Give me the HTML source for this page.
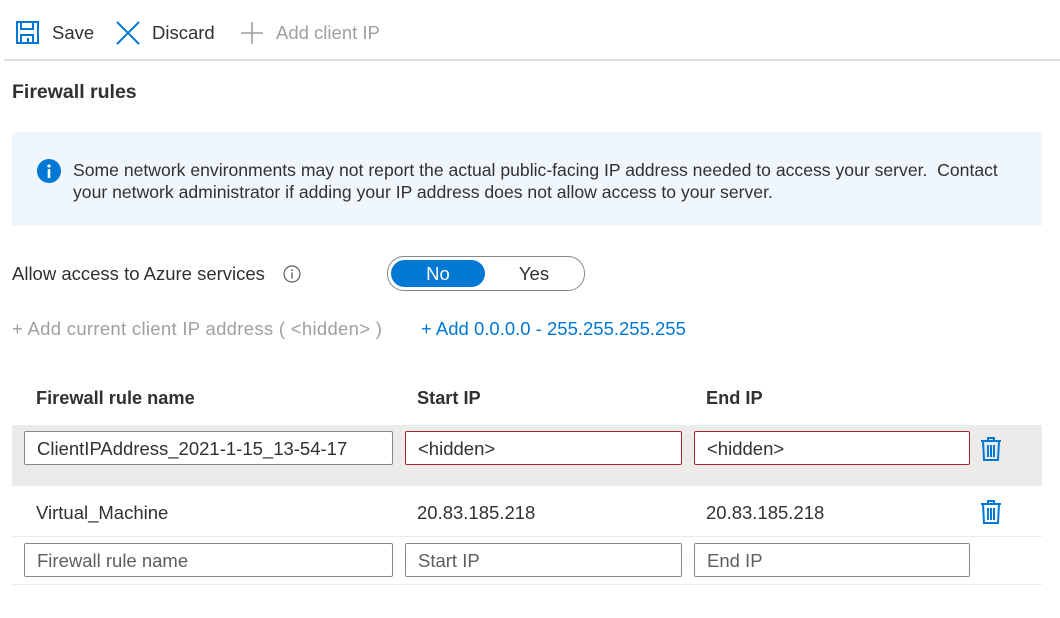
<!DOCTYPE html>
<html><head><meta charset="utf-8"><style>
body{margin:0;width:1060px;height:618px;background:#fff;font-family:"Liberation Sans",sans-serif;color:#323130;position:relative;overflow:hidden}
.a{position:absolute;white-space:nowrap}
.inp{position:absolute;height:34px;box-sizing:border-box;border:1px solid #8a8886;border-radius:2px;background:#fff;font-size:18.5px;line-height:34px;padding-left:12px;color:#323130}
.red{border-color:#a4262c}
.ph{color:#605e5c}
</style></head><body>
<svg class="a" style="left:15px;top:20px" width="26" height="26" viewBox="0 0 26 26" fill="none" stroke="#0078d4" stroke-width="2"><rect x="2" y="2" width="21" height="21"/><path d="M6 2v7h12V2M6 23v-8h12v8M13 18v5"/></svg>
<div class="a" style="left:52px;top:22px;font-size:18.5px">Save</div>
<svg class="a" style="left:115px;top:20px" width="26" height="26" viewBox="0 0 26 26" stroke="#0078d4" stroke-width="2"><path d="M2 2L24 24M24 2L2 24"/></svg>
<div class="a" style="left:152px;top:22px;font-size:18.5px">Discard</div>
<svg class="a" style="left:240px;top:21px" width="24" height="24" viewBox="0 0 24 24" stroke="#a19f9d" stroke-width="1.6"><path d="M12 1v22M1 12h22"/></svg>
<div class="a" style="left:276px;top:22px;font-size:18.5px;color:#a19f9d">Add client IP</div>
<div class="a" style="left:4px;top:59px;width:1056px;height:2px;background:#e1dfdd"></div>
<div class="a" style="left:12px;top:81px;font-size:19.5px;font-weight:bold">Firewall rules</div>
<div class="a" style="left:12px;top:132px;width:1030px;height:94px;background:#eff6fc"></div>
<svg class="a" style="left:37px;top:159px" width="24" height="24" viewBox="0 0 24 24"><circle cx="12" cy="12" r="12" fill="#0078d4"/><circle cx="12" cy="7" r="1.6" fill="#fff"/><rect x="10.7" y="10" width="2.6" height="9" fill="#fff"/></svg>
<div class="a" style="left:73px;top:159px;font-size:17.6px;line-height:22px">Some network environments may not report the actual public-facing IP address needed to access your server.&nbsp; Contact<br>your network administrator if adding your IP address does not allow access to your server.</div>
<div class="a" style="left:12px;top:263px;font-size:18.5px">Allow access to Azure services</div>
<svg class="a" style="left:283px;top:265px" width="18" height="18" viewBox="0 0 18 18"><circle cx="9" cy="9" r="8" fill="none" stroke="#605e5c" stroke-width="1.2"/><rect x="8.3" y="7.5" width="1.4" height="6" fill="#605e5c"/><circle cx="9" cy="5.2" r="0.9" fill="#605e5c"/></svg>
<div class="a" style="left:387px;top:256px;width:196px;height:33px;border:1px solid #8a8886;border-radius:17px"></div>
<div class="a" style="left:391px;top:260px;width:94px;height:27px;background:#0078d4;border-radius:14px;color:#fff;font-size:18.5px;text-align:center;line-height:27px">No</div>
<div class="a" style="left:487px;top:260px;width:94px;height:27px;font-size:18.5px;text-align:center;line-height:27px">Yes</div>
<div class="a" style="left:12px;top:318px;font-size:18.5px;color:#a19f9d;letter-spacing:0.3px">+ Add current client IP address ( &lt;hidden&gt; )</div>
<div class="a" style="left:421px;top:318px;font-size:18.5px;color:#0078d4">+ Add 0.0.0.0 - 255.255.255.255</div>
<div class="a" style="left:36px;top:388px;font-size:18.2px;font-weight:bold">Firewall rule name</div>
<div class="a" style="left:417px;top:388px;font-size:18.2px;font-weight:bold">Start IP</div>
<div class="a" style="left:706px;top:388px;font-size:18.2px;font-weight:bold">End IP</div>
<div class="a" style="left:12px;top:425px;width:1030px;height:61px;background:#edebe9"></div>
<div class="inp" style="left:24px;top:431px;width:369px">ClientIPAddress_2021-1-15_13-54-17</div>
<div class="inp red" style="left:405px;top:431px;width:277px">&lt;hidden&gt;</div>
<div class="inp red" style="left:694px;top:431px;width:276px">&lt;hidden&gt;</div>
<svg class="a" style="left:980px;top:436px" width="22" height="26" viewBox="0 0 22 26" fill="none" stroke="#0078d4" stroke-width="2"><path d="M1 5h20M8 5V2h6v3M3 5l1 19h14l1-19M8 9v12M11 9v12M14 9v12"/></svg>
<div class="a" style="left:36px;top:502px;font-size:18.5px">Virtual_Machine</div>
<div class="a" style="left:417px;top:502px;font-size:18.5px">20.83.185.218</div>
<div class="a" style="left:706px;top:502px;font-size:18.5px">20.83.185.218</div>
<svg class="a" style="left:980px;top:499px" width="22" height="26" viewBox="0 0 22 26" fill="none" stroke="#0078d4" stroke-width="2"><path d="M1 5h20M8 5V2h6v3M3 5l1 19h14l1-19M8 9v12M11 9v12M14 9v12"/></svg>
<div class="a" style="left:12px;top:536px;width:1030px;height:1px;background:#edebe9"></div>
<div class="inp ph" style="left:24px;top:543px;width:369px">Firewall rule name</div>
<div class="inp ph" style="left:405px;top:543px;width:277px">Start IP</div>
<div class="inp ph" style="left:694px;top:543px;width:276px">End IP</div>
<div class="a" style="left:12px;top:584px;width:1030px;height:1px;background:#edebe9"></div>
</body></html>
